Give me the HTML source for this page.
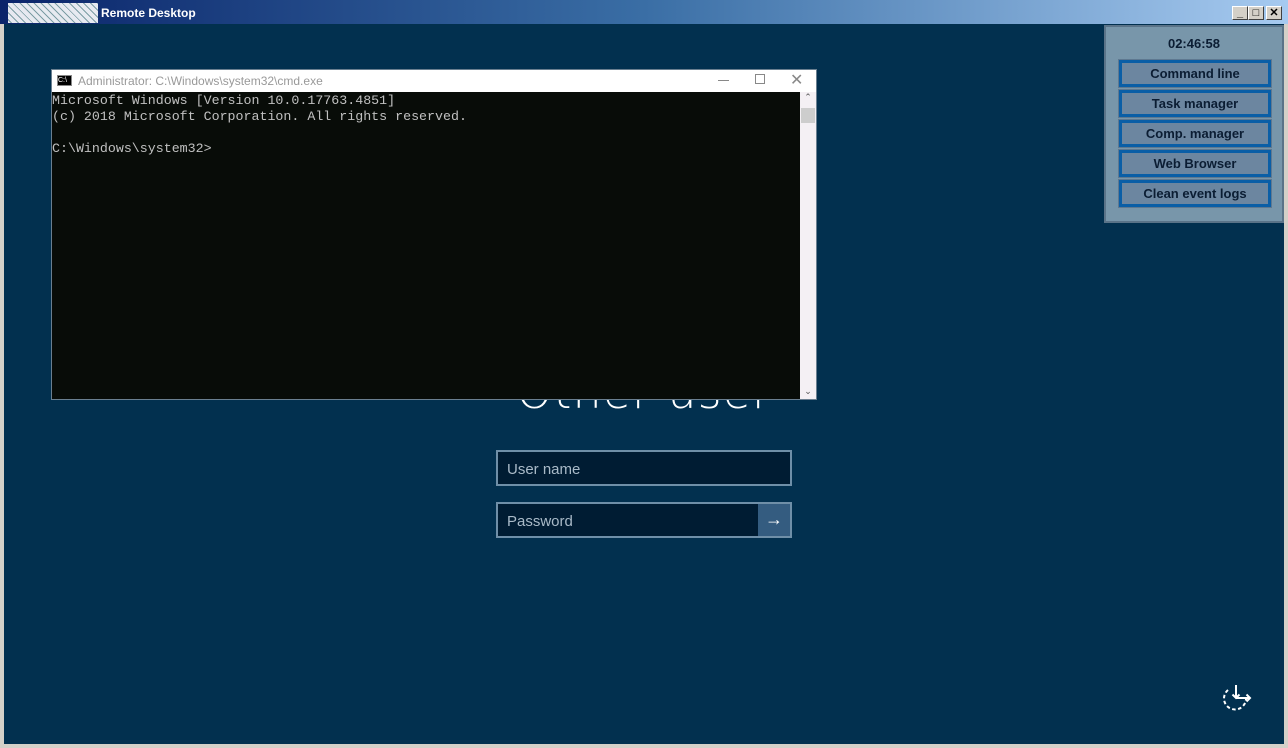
<!DOCTYPE html>
<html><head><style>
*{margin:0;padding:0;box-sizing:border-box}
body{width:1288px;height:748px;background:#d4d0c8;position:relative;overflow:hidden;font-family:"Liberation Sans",sans-serif}
.title{position:absolute;left:0;top:0;width:1288px;height:24px;background:linear-gradient(90deg,#0a246a 0%,#3a6ea5 50%,#a6caf0 100%);}
.title .t{position:absolute;left:101px;top:6px;color:#fff;font-weight:bold;font-size:12px}
.noise{position:absolute;left:8px;top:3px;width:90px;height:20px;background:repeating-linear-gradient(45deg,#fff 0 2px,#8aa 2px 3px,#fff 3px 5px);opacity:.9}
.wb{position:absolute;top:6px;width:16px;height:14px;background:#d4d0c8;border:1px solid;border-color:#fff #404040 #404040 #fff;font-size:11px;font-weight:bold;text-align:center;line-height:12px}
.client{position:absolute;left:4px;top:24px;width:1280px;height:720px;background:#02304f}
.panel{position:absolute;left:1104px;top:25px;width:180px;height:198px;background:#7896aa;border:2px solid #5a7388}
.clock{position:absolute;left:0;width:176px;top:9px;text-align:center;font-weight:bold;font-size:13px;color:#0b1d33}
.btn{position:absolute;left:13px;width:152px;height:27px;border:3px solid #0a5ea6;outline:1px solid #5e7890;background:#6c86a0;color:#0b1d33;font-weight:bold;font-size:13px;text-align:center;line-height:21px}
.cmd{position:absolute;left:51px;top:69px;width:766px;height:331px;background:#080c08;border:1px solid #6a7f90}
.cmdt{position:absolute;left:0;top:0;width:764px;height:22px;background:#fff;font-size:12px;color:#999}
.cmdt span{position:absolute;left:26px;top:4px}
.con{position:absolute;left:0;top:23px;font-family:"Liberation Mono",monospace;font-size:13.3px;line-height:16px;color:#c0c0c0;white-space:pre}
.sb{position:absolute;right:0;top:22px;width:16px;height:307px;background:#f4f0f4}
.other{position:absolute;left:0;width:1288px;top:365px;text-align:center;color:#fff;font-size:46px;font-weight:300;font-family:"DejaVu Sans","Liberation Sans",sans-serif;letter-spacing:1px}
.inp{position:absolute;left:496px;width:296px;height:36px;border:2px solid #6f8fa8;background:#001c33;color:#a9bac8;font-size:15px;padding:9px 0 0 9px}
</style></head><body>
<div class="title"><div class="noise"></div><div class="t">Remote Desktop</div>
<div class="wb" style="left:1232px">_</div><div class="wb" style="left:1248px">□</div><div class="wb" style="left:1266px">✕</div></div>
<div class="client"></div>
<div class="other">Other user</div>
<div class="inp" style="top:450px">User name</div>
<div class="inp" style="top:502px">Password<div style="position:absolute;right:0;top:0;width:32px;height:32px;background:#345c80;color:#fff;text-align:center;font-size:18px;line-height:30px">→</div></div>
<div class="cmd">
<div class="cmdt"><div style="position:absolute;left:5px;top:5px;width:15px;height:11px;background:#000;border:1px solid #888;color:#fff;font-size:7px;line-height:9px">C:\</div><span>Administrator: C:\Windows\system32\cmd.exe</span>
<div style="position:absolute;left:666px;top:10px;width:11px;height:1px;background:#888"></div>
<div style="position:absolute;left:703px;top:4px;width:10px;height:10px;border:1px solid #888"></div>
<div style="position:absolute;left:738px;top:0;font-size:16px;color:#888">✕</div></div>
<div class="con">Microsoft Windows [Version 10.0.17763.4851]
(c) 2018 Microsoft Corporation. All rights reserved.

C:\Windows\system32&gt;</div>
<div class="sb"><div style="position:absolute;top:16px;left:1px;width:14px;height:15px;background:#cdcdcd"></div><div style="position:absolute;top:0;width:16px;text-align:center;font-size:9px;color:#555">⌃</div><div style="position:absolute;bottom:2px;width:16px;text-align:center;font-size:9px;color:#555">⌄</div></div>
</div>
<div class="panel"><div class="clock">02:46:58</div>
<div class="btn" style="top:33px">Command line</div>
<div class="btn" style="top:63px">Task manager</div>
<div class="btn" style="top:93px">Comp. manager</div>
<div class="btn" style="top:123px">Web Browser</div>
<div class="btn" style="top:153px">Clean event logs</div>
</div>
<svg style="position:absolute;left:1218px;top:682px" width="36" height="32" viewBox="0 0 36 32"><path d="M10 8 A11 11 0 1 0 28 17" fill="none" stroke="#fff" stroke-width="2" stroke-dasharray="3.5 2.5"/><path d="M18 3 V16 M14.5 12.5 L18 16 L21.5 12.5 M18 16 H32 M28.5 12.5 L32 16 L28.5 19.5" fill="none" stroke="#fff" stroke-width="2"/></svg>
</body></html>
